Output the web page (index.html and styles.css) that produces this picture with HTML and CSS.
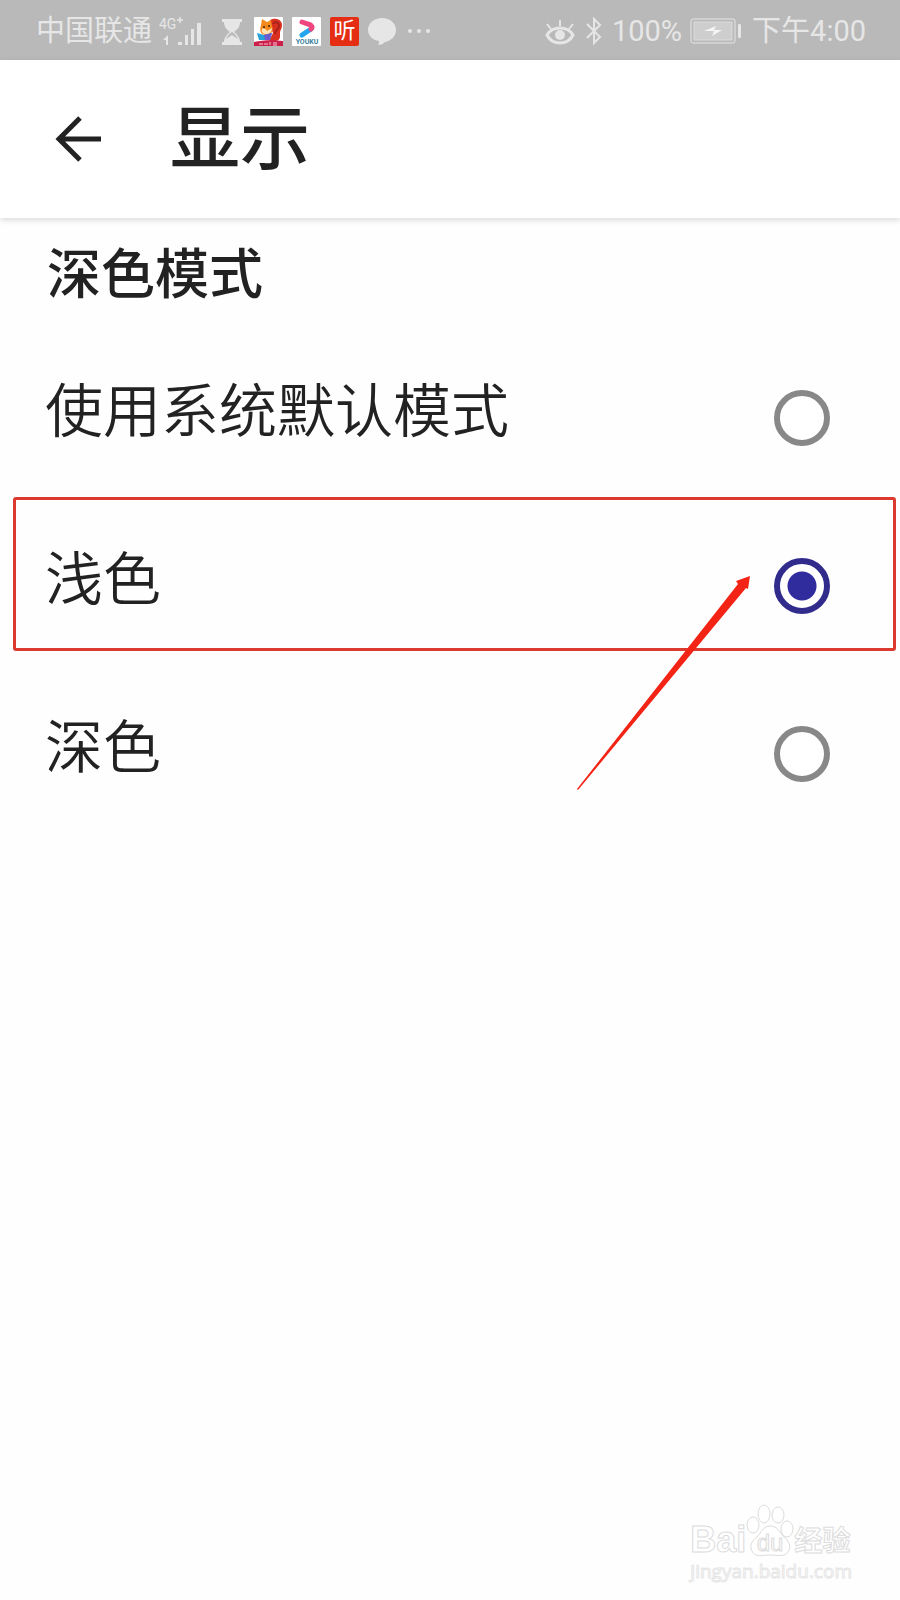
FILE: index.html
```html
<!DOCTYPE html>
<html lang="zh-CN">
<head>
  <meta charset="UTF-8" />
  <meta name="viewport" content="width=device-width, initial-scale=1.0"/>
  <title>显示</title>
  <link rel="stylesheet" href="styles.css">
</head>
<body>

<!-- Status bar -->
<div class="status-bar">
  <div class="carrier">
    <span>中国联通</span>
    <svg width="44" height="34" viewBox="0 0 44 34" fill="#e6e6e6">
      <text class="net-label" x="1" y="15">4G</text>
      <path d="M19 6h6M22 3v6" stroke="#e6e6e6" stroke-width="1.5"/>
      <path d="M5 26l5-5v10H8v-5z"/>
      <rect x="20" y="28" width="4" height="3"/>
      <rect x="27" y="21" width="3" height="10"/>
      <rect x="33" y="15" width="3" height="16"/>
      <rect x="39" y="9" width="4" height="22"/>
    </svg>
  </div>

  <div class="notices">
    <svg width="25" height="29" viewBox="0 0 25 29">
      <path d="M2 2h20v3h-2c0 5-3 8-6 10 3 2 6 6 6 10h2v3H2v-3h2c0-4 3-8 6-10C7 13 4 10 4 5H2z" fill="#e6e6e6"/>
      <path d="M6 22c1-3 3-5 6-7 3 2 5 4 6 7l-6-4z" fill="#b9b9b9"/>
    </svg>
    <svg width="29" height="29" viewBox="0 0 29 29">
      <rect width="29" height="29" rx="1" fill="#fff"/>
      <path d="M15 6c0-6 13-6 13 2 0 4-2 5-2 8s1 7-4 8h-7l4-8z" fill="#d9301f"/>
      <path d="M19 7c2-3 6-2 6 2s-4 3-4 8" fill="none" stroke="#a8231a" stroke-width="2"/>
      <path d="M7 8l1-6 5 3 4-2 1 6c2 5-1 9-6 9s-7-4-5-10z" fill="#f58a1f"/>
      <path d="M8 12c2-1 4 0 5 2l5-3c0 4-3 6-6 6s-5-2-4-5z" fill="#ffe3b5"/>
      <circle cx="10" cy="10" r="1" fill="#40200f"/>
      <circle cx="15" cy="9" r="1" fill="#40200f"/>
      <path d="M3 16l7 2 8-2-2 7H5z" fill="#279fd8"/>
      <path d="M10 18l8-2-2 7h-5z" fill="#6d5ad0"/>
      <path d="M0 25c9-2 20-2 29-1v5H0z" fill="#cc1f4b"/>
      <path d="M5 27h4M10 27h4M16 25v3M19 26h4M19 28h4" fill="none" stroke="#f6c9d4" stroke-width="1"/>
    </svg>
    <svg width="29" height="29" viewBox="0 0 29 29">
      <rect width="29" height="29" rx="1" fill="#fff"/>
      <path d="M10 18l9-6" stroke="#22a5ee" stroke-width="5" stroke-linecap="round"/>
      <path d="M10 5l6 2c4 1 5 3 3 5" fill="none" stroke="#f0457e" stroke-width="5" stroke-linecap="round"/>
      <text class="youku-label" x="15" y="27" text-anchor="middle" fill="#3b7f9d">YOUKU</text>
    </svg>
    <span class="ting-icon">听</span>
    <svg width="29" height="29" viewBox="0 0 29 29" fill="#e6e6e6">
      <path d="M14 1c8 0 14 5 14 12 0 6-5 11-11 12-2 2-4 3-7 3 1-1 1-3 1-4C5 23 0 19 0 13 0 6 6 1 14 1z"/>
    </svg>
    <svg width="28" height="29" viewBox="0 0 28 29" fill="#e6e6e6">
      <circle cx="4" cy="14" r="2"/>
      <circle cx="13" cy="14" r="2"/>
      <circle cx="22" cy="14" r="2"/>
    </svg>
  </div>

  <div class="system">
    <svg width="32" height="29" viewBox="0 0 32 29" fill="none" stroke="#e6e6e6" stroke-width="3">
      <path d="M3 18c3-5 8-7 13-7s10 2 13 7c-3 6-8 8-13 8S6 24 3 18z"/>
      <path d="M16 9V3M7 12L3 7M25 12l4-5" stroke-width="2"/>
      <circle cx="16" cy="18" r="5" fill="#e6e6e6" stroke="none"/>
    </svg>
    <svg width="20" height="30" viewBox="0 0 20 30" fill="none" stroke="#e6e6e6" stroke-width="2">
      <path d="M3 8l13 13-6 6V3l6 6L3 22"/>
    </svg>
    <span>100%</span>
    <svg width="54" height="26" viewBox="0 0 54 26">
      <rect x="1" y="1" width="44" height="24" rx="2" fill="none" stroke="#e6e6e6" stroke-width="1"/>
      <rect x="4" y="4" width="38" height="18" fill="#cecece" stroke="#dcdcdc"/>
      <rect x="48" y="6" width="3" height="14" rx="1" fill="#e6e6e6"/>
      <path d="M14 13l12-5-2 4h8l-10 6 2-5z" fill="#f5f5f5"/>
    </svg>
    <span>下午4:00</span>
  </div>
</div>

<header>
  <button class="back-btn" type="button" aria-label="返回">
    <svg width="48" height="48" viewBox="0 0 48 48" fill="none" stroke="#222" stroke-width="5">
      <path d="M47 24H6M26 3L5 24l21 21"/>
    </svg>
  </button>
  <h1>显示</h1>
</header>

<main>
  <h2 id="modeTitle">深色模式</h2>

  <!-- Mode options -->
  <div class="options" role="radiogroup" aria-labelledby="modeTitle">
    <div class="option">
      <label for="modeSystem">使用系统默认模式</label>
      <input type="radio" id="modeSystem" name="mode" value="system">
    </div>

    <div class="option marked">
      <label for="modeLight">浅色</label>
      <input type="radio" id="modeLight" name="mode" value="light" checked>
      <svg class="pointer" width="174" height="214" viewBox="0 0 174 214" fill="#f32415">
        <path d="M173 0l-2 13-2-1L1 214l-1-1L161 8l-2-3z"/>
      </svg>
    </div>

    <div class="option">
      <label for="modeDark">深色</label>
      <input type="radio" id="modeDark" name="mode" value="dark">
    </div>
  </div>
</main>

<!-- Watermark -->
<footer>
  <div class="brand">
    <span class="brand-latin">Bai</span>
    <svg width="48" height="56" viewBox="0 0 48 56" fill="#fff" stroke="#dcdcdc" stroke-width="1">
      <ellipse cx="7" cy="23" rx="6" ry="8"/>
      <ellipse cx="18" cy="12" rx="6" ry="9"/>
      <ellipse cx="32" cy="13" rx="6" ry="8"/>
      <ellipse cx="41" cy="27" rx="6" ry="8"/>
      <path d="M24 24c8 0 9 6 14 11 5 4 7 9 5 13-3 8-12 5-19 5s-15 3-18-4c-3-6 0-10 5-14 4-4 6-11 13-11z"/>
      <text class="brand-du" x="24" y="49" text-anchor="middle">du</text>
    </svg>
    <span class="brand-cjk">经验</span>
  </div>
  <div class="site">jingyan.baidu.com</div>
</footer>

</body>
</html>
```
FILE: styles.css
```css
*, *::after { box-sizing: border-box; }

body {
  font-family: Roboto, "Noto Sans CJK SC", sans-serif;
  margin: 0;
  min-height: 100vh;
  display: flex;
  flex-direction: column;
  background-color: #fefefe;
  color: #222;
}

svg {
  display: block;
  flex-shrink: 0;
}

.status-bar {
  display: flex;
  align-items: center;
  height: 60px;
  padding: 2px 34px 0 36px;
  background: #b9b9b9;
  color: #e6e6e6;
  font-size: 29px;
  line-height: 58px;
  white-space: nowrap;
}

.carrier, .notices, .system {
  display: flex;
  align-items: center;
}

.carrier {
  gap: 6px;
}

.net-label {
  font-size: 14px;
}

.notices {
  gap: 9px;
  margin-left: 18px;
}

.youku-label {
  font-size: 7px;
  font-weight: bold;
}

.ting-icon {
  width: 29px;
  height: 29px;
  border-radius: 2px;
  background: #e42d12;
  color: #fff;
  font-size: 22px;
  line-height: 28px;
  text-align: center;
}

.system {
  gap: 8px;
  margin-left: auto;
}

header {
  display: flex;
  align-items: center;
  gap: 68px;
  height: 158px;
  padding: 0 54px;
  background: #fff;
  box-shadow: 0 2px 6px rgba(0, 0, 0, 0.15);
}

.back-btn {
  padding: 0;
  border: none;
  background: none;
  cursor: pointer;
}

h1 {
  margin: 0;
  padding-top: 2px;
  font-size: 70px;
  font-weight: 500;
  line-height: 80px;
}

h2 {
  margin: 0;
  padding: 18px 47px;
  font-size: 54px;
  font-weight: 500;
  line-height: 80px;
}

.option {
  position: relative;
  display: flex;
  align-items: center;
  justify-content: space-between;
  height: 168px;
  padding: 0 70px 0 45px;
}

.option label {
  padding-bottom: 12px;
  font-size: 58px;
  font-weight: 350;
  line-height: 80px;
}

.option input {
  appearance: none;
  width: 56px;
  height: 56px;
  margin: 0;
  border: 6px solid #888;
  border-radius: 50%;
  background: #fff;
  cursor: pointer;
}

.option input:checked {
  border-color: #312c8c;
  background: radial-gradient(circle, #302c9e 14px, #fff 15px);
}

/* Red frame and arrow over the chosen row */
.marked::after {
  content: "";
  position: absolute;
  top: -5px;
  left: 13px;
  right: 4px;
  height: 154px;
  border: 3px solid #dc3a2e;
  border-radius: 3px;
  pointer-events: none;
}

.pointer {
  position: absolute;
  top: 74px;
  right: 149px;
  z-index: 1;
  pointer-events: none;
}

footer {
  align-self: flex-end;
  margin-top: auto;
  padding: 0 48px 16px 0;
  color: #fff;
  -webkit-text-stroke: 1px #dcdcdc;
}

.brand {
  display: flex;
  align-items: flex-end;
}

.brand-latin {
  font-family: "Liberation Sans", sans-serif;
  font-size: 36px;
  font-weight: bold;
  line-height: 36px;
}

.brand-du {
  font-family: "Liberation Sans", sans-serif;
  font-size: 24px;
}

.brand-cjk {
  font-size: 28px;
  font-weight: bold;
  line-height: 32px;
}

.site {
  font-family: "Open Sans", sans-serif;
  font-size: 19px;
  line-height: 26px;
  -webkit-text-stroke-color: #e6e6e6;
}
```
